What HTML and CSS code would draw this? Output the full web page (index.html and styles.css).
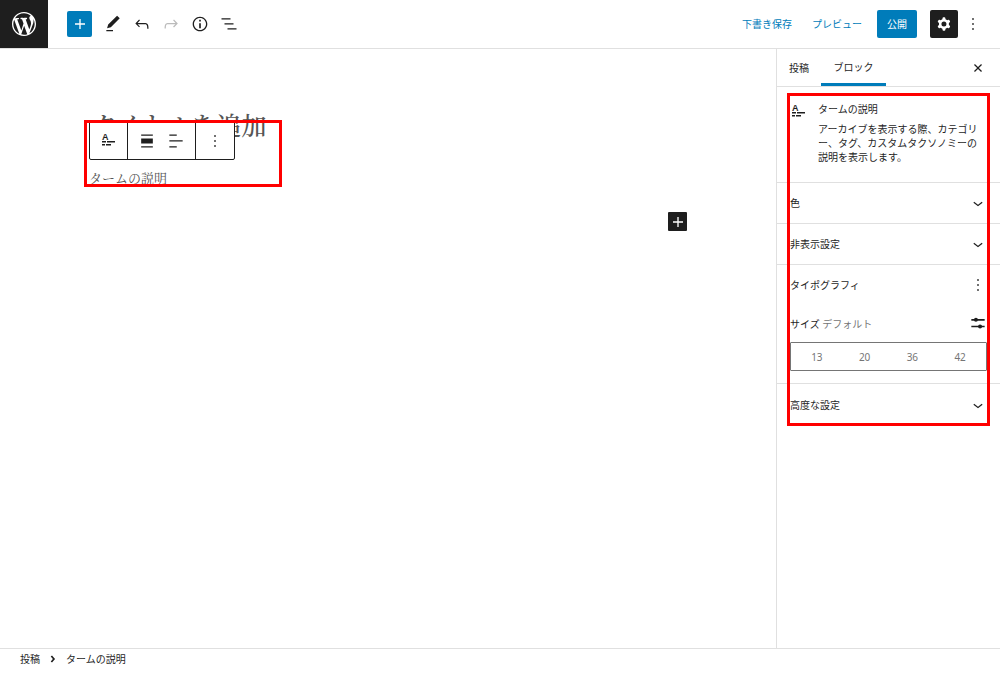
FILE: index.html
```html
<!DOCTYPE html>
<html lang="ja">
<head>
<meta charset="utf-8">
<meta name="viewport" content="width=device-width, initial-scale=1">
<title>投稿を編集</title>
<link rel="stylesheet" href="styles.css">
</head>
<body>
<svg class="sprite" aria-hidden="true">
  <symbol id="more" viewBox="0 0 24 24"><path d="M13 19h-2v-2h2v2zm0-6h-2v-2h2v2zm0-6h-2V5h2v2z"/></symbol>
  <symbol id="plus" viewBox="0 0 24 24"><path d="M18 11.2h-5.2V6h-1.6v5.2H6v1.6h5.2V18h1.6v-5.2H18z"/></symbol>
  <symbol id="chevron" viewBox="0 0 24 24"><path d="M17.5 11.6L12 16l-5.5-4.4.9-1.2L12 14l4.5-3.6 1 1.2z"/></symbol>
</svg>
<div class="editor">
  <header class="topbar">
    <a class="logo" href="#" aria-label="投稿一覧"><svg viewBox="0 0 20 20"><path d="M20 10c0-5.51-4.49-10-10-10C4.48 0 0 4.49 0 10c0 5.52 4.48 10 10 10 5.51 0 10-4.48 10-10zM7.78 15.37L4.37 6.22c.55-.02 1.17-.08 1.17-.08.5-.06.44-1.13-.06-1.11 0 0-1.45.11-2.37.11-.18 0-.37 0-.58-.01C4.12 2.69 6.87 1.11 10 1.11c2.33 0 4.45.87 6.05 2.34-.68-.11-1.65.39-1.65 1.58 0 .74.45 1.36.9 2.1.35.61.55 1.36.55 2.46 0 1.49-1.4 5-1.4 5l-3.03-8.37c.54-.02.82-.17.82-.17.5-.05.44-1.25-.06-1.22 0 0-1.44.12-2.38.12-.87 0-2.33-.12-2.33-.12-.5-.03-.56 1.2-.06 1.22l.92.08 1.26 3.41zM17.41 10c.24-.64.74-1.87.43-4.25.7 1.29 1.05 2.71 1.05 4.25 0 3.29-1.73 6.24-4.4 7.78.97-2.59 1.94-5.2 2.92-7.78zM6.1 18.09C3.12 16.65 1.11 13.53 1.11 10c0-1.3.23-2.48.72-3.59C3.25 10.3 4.67 14.2 6.1 18.09zm4.03-6.63l2.58 6.98c-.86.29-1.76.45-2.71.45-.79 0-1.57-.11-2.29-.33.81-2.38 1.62-4.74 2.42-7.1z"/></svg></a>
    <div class="tools">
      <button class="add" aria-label="ブロックを追加"><svg class="icon"><use href="#plus"/></svg></button>
      <button class="tool" aria-label="ツール"><svg class="icon" viewBox="0 0 24 24"><path d="M20.1 5.1L16.9 2 6.2 12.7l-1.3 4.4 4.5-1.3L20.1 5.1zM4 20.8h8v-1.5H4v1.5z"/></svg></button>
      <button class="tool" aria-label="元に戻す"><svg class="icon" viewBox="0 0 24 24"><path d="M18.3 11.7c-.6-.6-1.4-.9-2.3-.9H6.7l2.9-3.3-1.1-1-4.5 5L8.5 16l1-1-2.7-2.7H16c.5 0 .9.2 1.3.5 1 1 1 3.4 1 4.5v.3h1.5v-.2c0-1.5 0-4.3-1.5-5.7z"/></svg></button>
      <button class="tool" aria-label="やり直す" disabled><svg class="icon" viewBox="0 0 24 24"><path d="M15.6 6.5l-1.1 1 2.9 3.3H8c-.9 0-1.7.3-2.3.9-1.4 1.5-1.4 4.2-1.4 5.6v.2h1.5v-.3c0-1.1 0-3.5 1-4.5.3-.3.7-.5 1.3-.5h9.2L14.5 15l1.1 1.1 4.6-4.6-4.6-5z"/></svg></button>
      <button class="tool" aria-label="詳細"><svg class="icon" viewBox="0 0 24 24"><path d="M12 3.2c-4.8 0-8.8 3.9-8.8 8.8 0 4.8 3.9 8.8 8.8 8.8 4.8 0 8.8-3.9 8.8-8.8 0-4.8-4-8.8-8.8-8.8zm0 16c-4 0-7.2-3.3-7.2-7.2C4.8 8 8 4.8 12 4.8s7.2 3.3 7.2 7.2c0 4-3.2 7.2-7.2 7.2zM11 17h2v-6h-2v6zm0-8h2V7h-2v2z"/></svg></button>
      <button class="tool" aria-label="リスト表示"><svg class="icon" viewBox="0 0 24 24"><path d="M13.8 5.2H3v1.5h10.8V5.2zm-3.6 12v1.5H21v-1.5H10.2zm7.2-6H6.6v1.5h10.8v-1.5z"/></svg></button>
    </div>
    <div class="actions">
      <button class="link">下書き保存</button>
      <button class="link">プレビュー</button>
      <button class="publish">公開</button>
      <button class="cog" aria-label="設定"><svg class="icon" viewBox="0 0 24 24"><path fill-rule="evenodd" d="M10.289 4.836A1 1 0 0111.275 4h1.306a1 1 0 01.987.836l.244 1.466c.787.26 1.503.679 2.108 1.218l1.393-.522a1 1 0 011.216.437l.653 1.13a1 1 0 01-.23 1.273l-1.148.944a6.025 6.025 0 010 2.435l1.149.946a1 1 0 01.23 1.272l-.653 1.13a1 1 0 01-1.216.437l-1.394-.522c-.605.54-1.32.958-2.108 1.218l-.244 1.466a1 1 0 01-.987.836h-1.306a1 1 0 01-.986-.836l-.244-1.466a5.995 5.995 0 01-2.108-1.218l-1.394.522a1 1 0 01-1.217-.436l-.653-1.131a1 1 0 01.23-1.272l1.149-.946a6.026 6.026 0 010-2.435l-1.148-.944a1 1 0 01-.23-1.272l.653-1.131a1 1 0 011.217-.437l1.393.522a5.994 5.994 0 012.108-1.218l.244-1.466zM14.929 12a3 3 0 11-6 0 3 3 0 016 0z"/></svg></button>
      <button class="options" aria-label="オプション"><svg class="icon"><use href="#more"/></svg></button>
    </div>
  </header>

  <div class="workspace">
    <main class="canvas">
      <div class="content">
        <h1 class="post-title">タイトルを追加</h1>
        <p class="placeholder">タームの説明</p>
        <button class="inserter" aria-label="ブロックを追加"><svg class="icon"><use href="#plus"/></svg></button>
        <div class="block-toolbar">
          <div class="group"><button aria-label="タームの説明"><svg class="icon term" viewBox="0 0 20 20"><text x="3" y="9">A</text><path d="M3 10h4v1.5H3zM8 10h3v1.5H8zM11 10h5v1.5h-5zM3 13h3v1.5H3zM7 13h5v1.5H7z"/></svg></button></div>
          <div class="group pair">
            <button aria-label="配置"><svg class="icon" viewBox="0 0 24 24"><path d="M5 15h14V9H5v6zm0 4.8h14v-1.5H5v1.5zM5 4.2v1.5h14V4.2H5z"/></svg></button>
            <button aria-label="テキストの配置"><svg class="icon" viewBox="0 0 24 24"><path d="M4 19.8h8.9v-1.5H4v1.5zm8.9-15.6H4v1.5h8.9V4.2zm-8.9 7v1.5h16v-1.5H4z"/></svg></button>
          </div>
          <div class="group"><button aria-label="オプション"><svg class="icon"><use href="#more"/></svg></button></div>
        </div>
        <div class="marker marker-block"></div>
      </div>
    </main>

    <aside class="sidebar">
      <div class="tabs">
        <button class="tab">投稿</button>
        <button class="tab active">ブロック</button>
        <button class="close" aria-label="閉じる"><svg class="icon" viewBox="0 0 24 24"><path d="M12 13.06l3.712 3.713 1.061-1.06L13.061 12l3.712-3.712-1.06-1.06L12 10.938 8.288 7.227l-1.061 1.06L10.939 12l-3.712 3.712 1.06 1.061L12 13.061z"/></svg></button>
      </div>
      <div class="inspector">
        <section class="card">
          <svg class="icon term" viewBox="0 0 20 20"><text x="3" y="9">A</text><path d="M3 10h4v1.5H3zM8 10h3v1.5H8zM11 10h5v1.5h-5zM3 13h3v1.5H3zM7 13h5v1.5H7z"/></svg>
          <div>
            <h2>タームの説明</h2>
            <p>アーカイブを表示する際、カテゴリー、タグ、カスタムタクソノミーの説明を表示します。</p>
          </div>
        </section>
        <button class="panel">色<svg class="icon"><use href="#chevron"/></svg></button>
        <button class="panel">非表示設定<svg class="icon"><use href="#chevron"/></svg></button>
        <section class="typography">
          <div class="row head"><h2>タイポグラフィ</h2><button aria-label="タイポグラフィのオプション"><svg class="icon"><use href="#more"/></svg></button></div>
          <div class="row size"><span>サイズ <span class="muted">デフォルト</span></span><button aria-label="カスタムサイズを設定"><svg class="icon" viewBox="0 0 24 24"><path d="M4 6h16v2H4zM4 14h16v2H4z"/><circle cx="9.5" cy="7" r="2.4"/><circle cx="14.500" cy="15" r="2.4"/></svg></button></div>
          <div class="sizes" role="group" aria-label="サイズ"><button>13</button><button>20</button><button>36</button><button>42</button></div>
        </section>
        <button class="panel">高度な設定<svg class="icon"><use href="#chevron"/></svg></button>
        <div class="marker marker-inspector"></div>
      </div>
    </aside>
  </div>

  <footer class="breadcrumb">
    <a href="#">投稿</a>
    <svg class="icon" viewBox="0 0 24 24"><path d="M10.3 6L15.5 12l-5.2 6-2.2-1.8L11.8 12 8.1 7.8z"/></svg>
    <span>タームの説明</span>
  </footer>
</div>
</body>
</html>
```
FILE: styles.css
```css
* { box-sizing: border-box; }

body {
  margin: 0;
  background: #fff;
  color: #1e1e1e;
  font: 10px/14px "Noto Sans", "Noto Sans CJK JP", sans-serif;
}

button {
  display: flex;
  align-items: center;
  justify-content: center;
  margin: 0;
  padding: 0;
  border: 0;
  background: none;
  color: inherit;
  font: inherit;
}

h1, h2, p { margin: 0; font-size: inherit; font-weight: 400; }
a { color: inherit; text-decoration: none; }

.sprite { position: absolute; width: 0; height: 0; }
.icon { display: block; flex: none; width: 20px; height: 20px; fill: currentColor; }
.term text { font: 700 9px "Liberation Sans", sans-serif; }

.editor { display: flex; flex-direction: column; min-height: 100vh; }

.topbar {
  display: flex;
  align-items: center;
  height: 49px;
  border-bottom: 1px solid #e0e0e0;
}
.logo {
  display: grid;
  place-items: center;
  width: 48px;
  height: 48px;
  background: #1e1e1e;
  color: #fff;
}
.logo svg { width: 24px; height: 24px; fill: currentColor; }

.tools { display: flex; align-items: center; gap: 1px; padding-left: 19px; }
.tool { width: 28px; height: 28px; }
.tool:disabled { color: #bbb; }
.add {
  width: 25px;
  height: 26px;
  margin-right: 6px;
  border-radius: 2px;
  background: #007cba;
  color: #fff;
}

.actions { display: flex; align-items: center; margin-left: auto; padding-right: 17px; }
.link { margin-right: 20px; color: #007cba; }
.link + .publish { margin-left: -5px; }
.publish, .cog { height: 28px; border-radius: 2px; color: #fff; }
.publish { width: 40px; margin-right: 13px; background: #007cba; }
.cog { width: 28px; margin-right: 5px; background: #1e1e1e; }

.workspace { display: flex; flex: 1; }
.canvas { flex: 1; min-width: 0; padding: 0 89px; }
.content {
  position: relative;
  padding-top: 57px;
  font-family: "Noto Serif CJK JP", "Noto Serif JP", "Liberation Serif", "Noto Sans CJK JP", serif;
}
.post-title { padding-left: 3px; color: #555; font-size: 25px; font-weight: 500; line-height: 36px; }
.placeholder { margin-top: 27px; color: #555; font-size: 13px; line-height: 18px; }
.inserter {
  width: 19px;
  height: 19px;
  margin: 25px 0 0 auto;
  border-radius: 1px;
  background: #1e1e1e;
  color: #fff;
}

.block-toolbar {
  position: absolute;
  top: 72px;
  left: 0;
  display: flex;
  height: 39px;
  border: 1px solid #1e1e1e;
  border-radius: 2px;
  background: #fff;
}
.group { display: flex; align-items: center; justify-content: center; width: 38px; }
.group + .group { border-left: 1px solid #1e1e1e; }
.group:first-child { width: 37px; }
.group:last-child { width: 39px; }
.group.pair { width: 68px; gap: 9px; }

.marker { position: absolute; border: 3px solid #f00; pointer-events: none; }
.marker-block { top: 71px; left: -5px; width: 198px; height: 67px; }
.marker-inspector { inset: 6px 10px 0; }

.sidebar { width: 224px; border-left: 1px solid #e0e0e0; }
.tabs { display: flex; height: 38px; border-bottom: 1px solid #e0e0e0; }
.tab { padding: 0 12px; }
.active { width: 65px; border-bottom: 3px solid #007cba; padding-top: 2px; }
.close { margin-left: auto; padding-right: 12px; }

.inspector { position: relative; }
.card { display: flex; gap: 9px; padding: 15px 15px 18px 12px; }
.card p { margin-top: 6px; line-break: anywhere; }

.panel {
  justify-content: space-between;
  width: 100%;
  height: 41px;
  padding: 0 12px 0 13px;
  border-top: 1px solid #e0e0e0;
}
.typography { padding: 0 13px 12px; border-top: 1px solid #e0e0e0; }
.row { display: flex; align-items: center; justify-content: space-between; }
.row button { margin-right: -1px; }
.head { height: 40px; }
.size { height: 37px; }
.muted { color: #757575; }
.sizes {
  display: grid;
  grid-template-columns: repeat(4, 1fr);
  height: 29px;
  padding: 0 2px;
  border: 1px solid #757575;
  border-radius: 1px;
  color: #757575;
}
.typography + .panel { height: 43px; }

.breadcrumb {
  display: flex;
  align-items: center;
  gap: 6px;
  padding: 3px 20px 28px;
  border-top: 1px solid #e0e0e0;
}
.breadcrumb .icon { width: 14px; height: 14px; }
```
